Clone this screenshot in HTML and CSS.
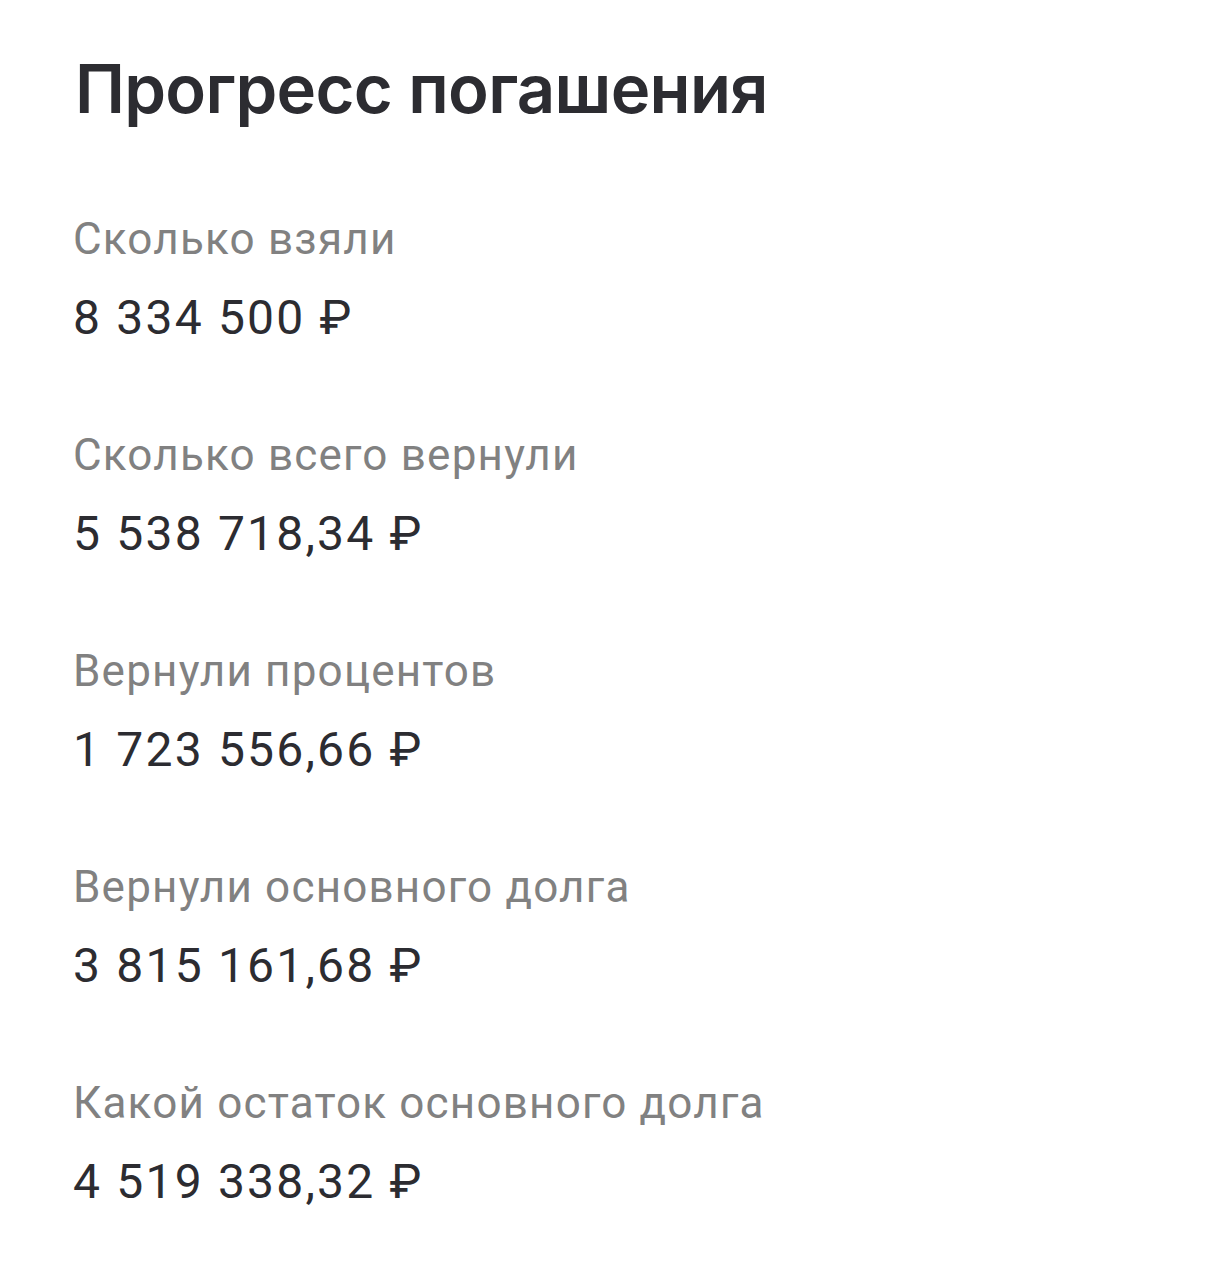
FILE: index.html
```html
<!DOCTYPE html>
<html lang="ru">
<head>
<meta charset="utf-8">
<title>Прогресс погашения</title>
<link rel="stylesheet" href="styles.css">
</head>
<body>
<main class="card">
  <h1 class="title">Прогресс погашения</h1>
  <dl class="list">
    <div class="item">
      <dt class="label">Сколько взяли</dt>
      <dd class="value">8 334 500 ₽</dd>
    </div>
    <div class="item">
      <dt class="label">Сколько всего вернули</dt>
      <dd class="value">5 538 718,34 ₽</dd>
    </div>
    <div class="item">
      <dt class="label">Вернули процентов</dt>
      <dd class="value">1 723 556,66 ₽</dd>
    </div>
    <div class="item">
      <dt class="label">Вернули основного долга</dt>
      <dd class="value">3 815 161,68 ₽</dd>
    </div>
    <div class="item">
      <dt class="label">Какой остаток основного долга</dt>
      <dd class="value">4 519 338,32 ₽</dd>
    </div>
  </dl>
</main>
</body>
</html>
```

FILE: styles.css
```css
html, body {
  margin: 0;
  padding: 0;
  background: #ffffff;
}

body {
  font-family: Roboto, "Noto Sans", sans-serif;
  color: #2c2c31;
}

.card {
  padding: 49px 73px 0 73px;
}

.title {
  margin: 0 0 84px 2px;
  font-family: Inter, "Noto Sans", sans-serif;
  font-weight: 600;
  font-size: 67px;
  line-height: 80px;
  letter-spacing: -0.7px;
  color: #2c2c31;
}

.list {
  margin: 0;
  display: flex;
  flex-direction: column;
  gap: 83px;
}

.item {
  display: flex;
  flex-direction: column;
  gap: 25px;
}

.label {
  margin: 0;
  font-size: 44px;
  line-height: 52px;
  letter-spacing: 1.2px;
  color: #818181;
}

.value {
  margin: 0;
  font-size: 48px;
  line-height: 56px;
  letter-spacing: 2.2px;
  color: #2c2c31;
}
```
